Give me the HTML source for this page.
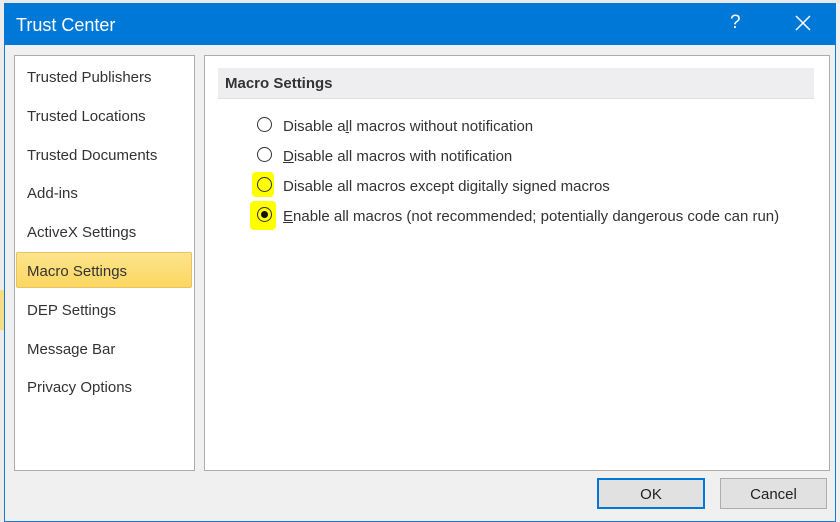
<!DOCTYPE html><html><head><style>
body{margin:0;width:840px;height:522px;position:relative;background:#f0f0f0;font-family:"Liberation Sans",sans-serif;overflow:hidden}
.abs{position:absolute}
.t{font-size:15px;color:#333}
.rad{position:absolute;width:15px;height:15px;border:1px solid #333;border-radius:50%;background:#fff;box-sizing:border-box}
</style></head><body>
<div class="abs" style="left:0;top:0;width:840px;height:3px;background:#e8e8e8"></div>
<div class="abs" style="left:0;top:0;width:4px;height:522px;background:#ececec"></div>
<div class="abs" style="left:0;top:290px;width:4px;height:40px;background:#f5dc86"></div>
<div class="abs" style="left:4px;top:3px;width:832px;height:519px;background:#f0f0f0;border:1px solid #1979ca;box-sizing:border-box"></div>
<div class="abs" style="left:4px;top:3px;width:832px;height:42px;background:#0078d7"></div>
<div class="abs" style="left:16px;top:15px;font-size:18px;color:#fff">Trust Center</div>
<div class="abs" style="left:730px;top:12px;font-size:19px;color:#fff">?</div>
<svg class="abs" style="left:795px;top:15px" width="16" height="16"><path d="M1 1L15 15M15 1L1 15" stroke="#fff" stroke-width="1.5"/></svg>
<div class="abs" style="left:14px;top:55px;width:181px;height:416px;background:#fff;border:1px solid #acacac;box-sizing:border-box"></div>
<div class="abs" style="left:16px;top:252px;width:176px;height:36px;background:linear-gradient(#fde58c,#fbd661);border:1px solid #e5c365;border-radius:2px;box-sizing:border-box"></div>
<div class="abs t" style="left:27px;top:69px;line-height:18px">
<div style="height:38.8px">Trusted Publishers</div><div style="height:38.8px">Trusted Locations</div><div style="height:38.8px">Trusted Documents</div><div style="height:38.8px">Add-ins</div><div style="height:38.8px">ActiveX Settings</div><div style="height:38.8px">Macro Settings</div><div style="height:38.8px">DEP Settings</div><div style="height:38.8px">Message Bar</div><div style="height:38.8px">Privacy Options</div></div>
<div class="abs" style="left:204px;top:55px;width:626px;height:416px;background:#fff;border:1px solid #acacac;box-sizing:border-box"></div>
<div class="abs" style="left:218px;top:68px;width:596px;height:30px;background:#eeeef0;border-bottom:1px solid #e0e0e0"></div>
<div class="abs" style="left:225px;top:75px;font-size:15px;font-weight:bold;color:#333">Macro Settings</div>
<div class="abs" style="left:252px;top:172px;width:22px;height:25px;background:#ffff00;border-radius:4px"></div>
<div class="abs" style="left:250px;top:201px;width:26px;height:29px;background:#ffff00;border-radius:4px"></div>
<div class="rad" style="left:257px;top:117px"></div>
<div class="rad" style="left:257px;top:147px"></div>
<div class="rad" style="left:257px;top:177px;background:transparent"></div>
<div class="rad" style="left:257px;top:207px;background:transparent"><div style="width:7px;height:7px;background:#111;border-radius:50%;margin:3px"></div></div>
<div class="abs t" style="left:283px;top:118px">Disable a<u>l</u>l macros without notification</div>
<div class="abs t" style="left:283px;top:148px"><u>D</u>isable all macros with notification</div>
<div class="abs t" style="left:283px;top:178px">Disable all macros except digitally signed macros</div>
<div class="abs t" style="left:283px;top:208px"><u>E</u>nable all macros (not recommended; potentially dangerous code can run)</div>
<div class="abs" style="left:597px;top:478px;width:108px;height:31px;background:#e1e1e1;border:2px solid #0078d7;box-sizing:border-box;text-align:center;line-height:29px;font-size:15px;color:#222">OK</div>
<div class="abs" style="left:720px;top:478px;width:107px;height:31px;background:#e1e1e1;border:1px solid #adadad;box-sizing:border-box;text-align:center;line-height:31px;font-size:15px;color:#222">Cancel</div>
</body></html>
